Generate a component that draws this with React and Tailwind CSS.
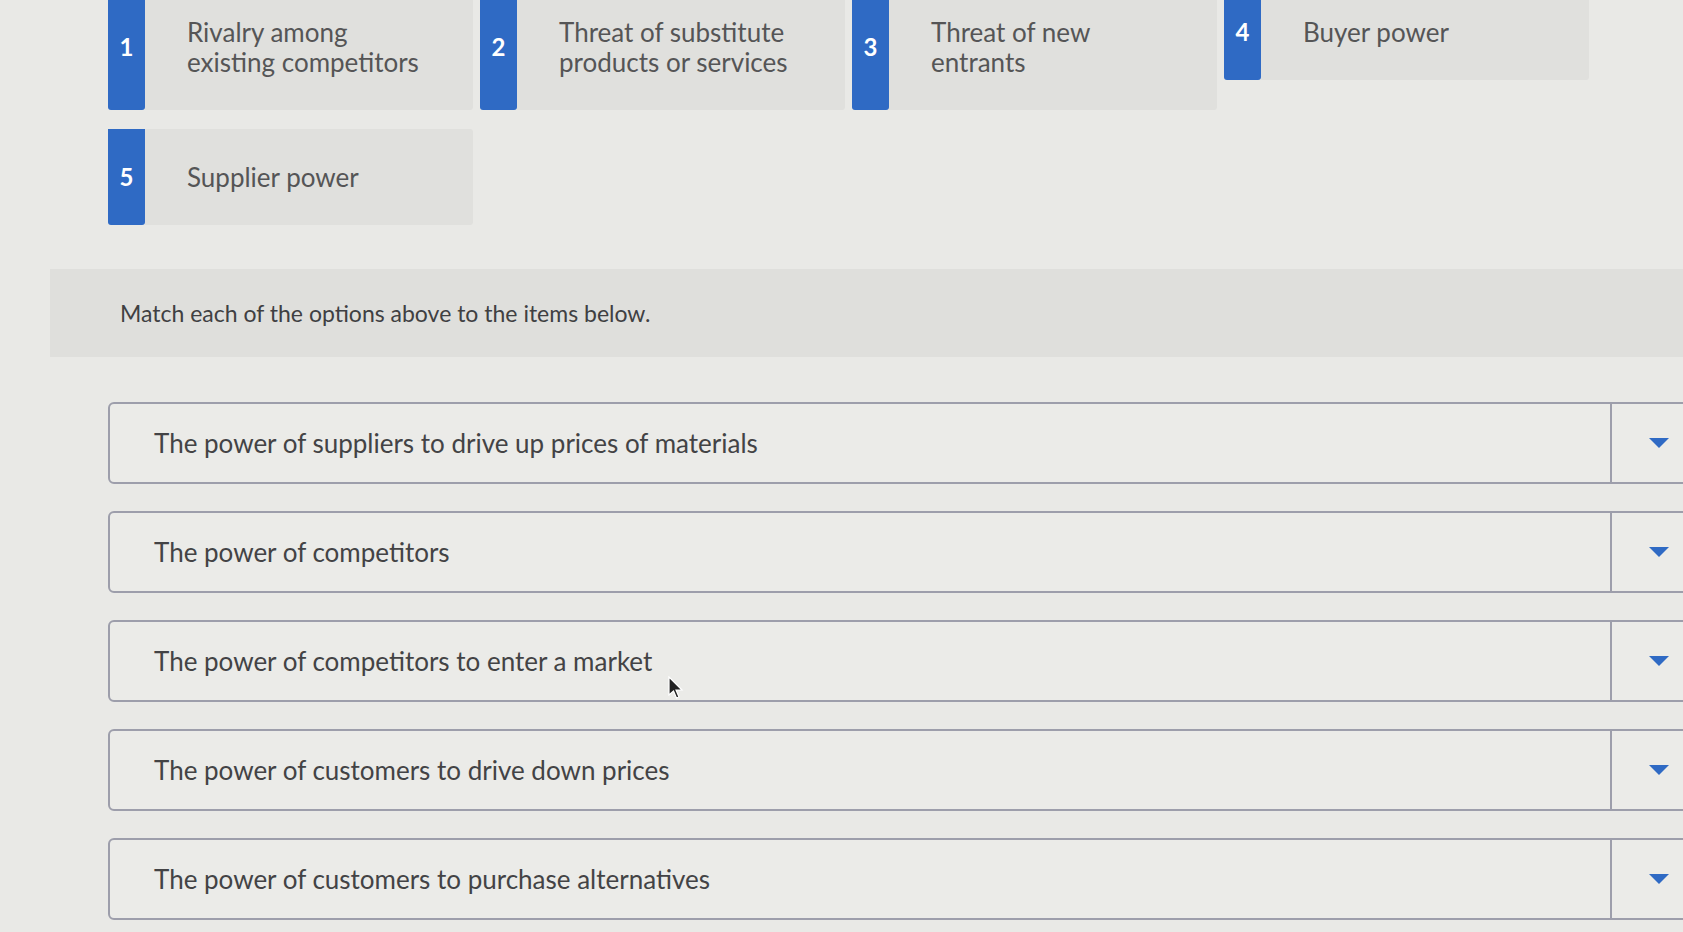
import React from "react";

const cards = [
  { n: "1", lines: ["Rivalry among", "existing competitors"] },
  { n: "2", lines: ["Threat of substitute", "products or services"] },
  { n: "3", lines: ["Threat of new", "entrants"] },
  { n: "4", lines: ["Buyer power"] },
  { n: "5", lines: ["Supplier power"] },
];

const rows = [
  "The power of suppliers to drive up prices of materials",
  "The power of competitors",
  "The power of competitors to enter a market",
  "The power of customers to drive down prices",
  "The power of customers to purchase alternatives",
];

function Card({ n, lines }) {
  return (
    <div className="flex">
      <div className="w-[37px] shrink-0 bg-[#2f6ac4] rounded-b-[3px] flex items-center justify-center text-white font-bold text-[24px]">
        {n}
      </div>
      <div className="flex-1 bg-[#e0e0dd] rounded-r-[3px] pl-[42px] py-[33px] text-[26px] leading-[30px] text-[#555556]">
        {lines.map((l, i) => (
          <div key={i}>{l}</div>
        ))}
      </div>
    </div>
  );
}

function Row({ text }) {
  return (
    <div className="w-[1600px] h-[82px] flex border-2 border-[#9d9eab] rounded-[6px] bg-[#ebebe8]">
      <div className="flex-1 flex items-center pl-[44px] text-[26px] text-[#434345]">
        {text}
      </div>
      <div className="w-[96px] border-l-2 border-[#9d9eab] flex items-center justify-center">
        <svg width="20" height="10" viewBox="0 0 20 10">
          <polygon points="0,0 20,0 10,10" fill="#2f6ac4" />
        </svg>
      </div>
    </div>
  );
}

export default function App() {
  return (
    <div className="relative w-[1683px] h-[932px] overflow-hidden bg-[#e9e9e6] font-['Lato',_sans-serif]">
      <div className="pl-[108px] -mt-[16px] grid grid-cols-[365px_365px_365px_365px] gap-x-[7px] gap-y-[19px] items-start">
        {cards.map((c) => (
          <Card key={c.n} {...c} />
        ))}
      </div>
      <div className="mt-[44px] ml-[50px] h-[88px] bg-[#dfdfdc] flex items-center pl-[70px] text-[23px] text-[#404042]">
        Match each of the options above to the items below.
      </div>
      <div className="pl-[108px] pt-[45px] flex flex-col gap-[27px]">
        {rows.map((r) => (
          <Row key={r} text={r} />
        ))}
      </div>
      <svg
        className="absolute left-[668px] top-[676px]"
        width="16"
        height="24"
        viewBox="0 0 16 24"
      >
        <path
          d="M1 1 L1 19 L5.5 15 L8.5 22 L11 21 L8 14 L14 14 Z"
          fill="#222"
          stroke="#fff"
          strokeWidth="1.2"
        />
      </svg>
    </div>
  );
}
